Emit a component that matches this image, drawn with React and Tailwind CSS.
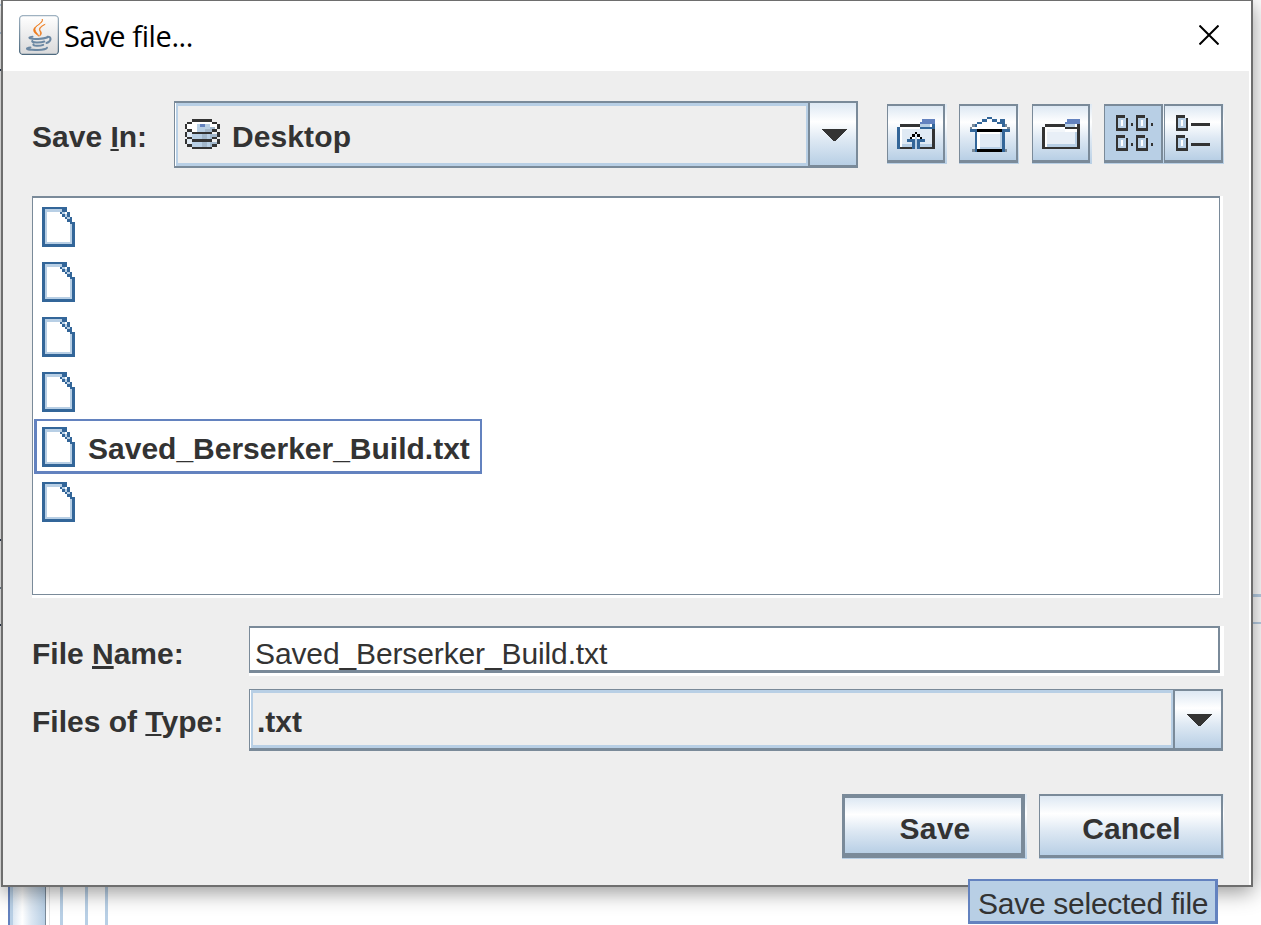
import React from 'react';

const GLOSS = 'bg-[linear-gradient(180deg,#dde8f3_0%,#ffffff_30%,#dde8f3_60%,#b8cfe5_100%)]';

/* Draws a pixel icon from [fill, x, y, width, height] tuples. */
function Pixels({ w, h, rects, className = '' }) {
  return (
    <svg width={w} height={h} viewBox={`0 0 ${w} ${h}`} shapeRendering="crispEdges" className={`block shrink-0 ${className}`}>
      {rects.map(([fill, x, y, rw, rh], i) => (
        <rect key={i} x={x} y={y} width={rw} height={rh} fill={fill} />
      ))}
    </svg>
  );
}

const K = '#333333', B = '#336699', L = '#b8cfe5', P = '#6382bf', W = '#ffffff', G = '#7a8a99', F = '#e0eaf4', N = '#000000', S = '#a3b8cc';

const FILE = [
  [W, 3, 2, 20, 36], [W, 20, 15, 10, 22],
  [B, 0, 0, 3, 40], [B, 0, 0, 25, 2], [B, 0, 37, 33, 3], [B, 30, 15, 3, 25],
  [L, 3, 2, 17, 3], [L, 3, 2, 2, 35], [L, 3, 35, 27, 2], [L, 28, 17, 2, 20],
  [B, 20, 0, 5, 5], [W, 20, 5, 5, 2], [L, 20, 5, 3, 2], [B, 18, 5, 2, 2], [B, 20, 7, 3, 3], [L, 23, 7, 2, 3],
  [B, 25, 5, 3, 5], [B, 23, 10, 2, 2], [L, 25, 10, 3, 3], [B, 28, 10, 2, 5], [B, 25, 12, 5, 3], [B, 28, 15, 5, 2],
];

const DISK = [
  [W, 7, 3, 20, 25], [W, 2, 5, 30, 5],
  [L, 12, 5, 13, 8], [P, 15, 5, 5, 3], [S, 20, 10, 7, 3], [S, 25, 8, 5, 2],
  [F, 2, 13, 8, 5], [L, 7, 15, 12, 5], [S, 17, 15, 15, 3], [S, 17, 18, 10, 2], [L, 22, 15, 3, 5],
  [F, 2, 20, 8, 5], [L, 7, 23, 12, 5], [S, 17, 23, 15, 2], [S, 17, 25, 10, 3], [L, 22, 23, 3, 5],
  [K, 7, 0, 20, 3], [K, 2, 3, 5, 2], [K, 27, 3, 5, 2], [K, 0, 5, 2, 5], [K, 32, 5, 3, 5],
  [K, 2, 10, 5, 3], [K, 27, 10, 5, 3], [K, 7, 13, 20, 2], [K, 0, 13, 2, 5], [K, 32, 13, 3, 5],
  [K, 2, 18, 5, 2], [K, 27, 18, 5, 2], [K, 7, 20, 20, 3], [K, 0, 20, 2, 5], [K, 32, 20, 3, 5],
  [K, 2, 25, 5, 3], [K, 27, 25, 5, 3], [K, 7, 28, 20, 2],
];

const UP = [
  [W, 3, 8, 32, 20], [F, 5, 10, 30, 18], [L, 5, 25, 10, 3], [L, 23, 25, 12, 3],
  [B, 0, 8, 3, 22], [K, 3, 5, 20, 3], [P, 25, 0, 13, 5], [P, 23, 3, 2, 2], [L, 23, 5, 12, 3], [W, 33, 5, 2, 3],
  [K, 35, 10, 3, 20], [B, 35, 5, 3, 5], [B, 23, 8, 15, 2], [K, 3, 28, 35, 2],
  [N, 18, 13, 2, 2], [N, 15, 15, 3, 3], [N, 20, 15, 3, 3], [N, 13, 18, 2, 2], [N, 23, 18, 2, 2],
  [W, 15, 18, 8, 2], [B, 10, 20, 8, 3], [B, 20, 20, 8, 3], [B, 15, 20, 3, 10], [B, 20, 20, 3, 10], [L, 18, 18, 2, 12],
];

const HOME = [
  [W, 17, 2, 5, 10], [W, 12, 5, 15, 7], [W, 7, 7, 25, 5], [W, 2, 10, 35, 2],
  [W, 7, 15, 25, 17], [F, 10, 17, 20, 13], [L, 30, 15, 2, 17], [L, 10, 30, 22, 2],
  [B, 17, 0, 5, 2], [B, 12, 2, 5, 3], [B, 22, 2, 5, 3], [B, 7, 5, 5, 2], [B, 27, 5, 5, 2], [B, 30, 2, 5, 5],
  [B, 5, 7, 2, 3], [G, 2, 7, 3, 3], [B, 32, 7, 3, 3], [G, 35, 7, 2, 3], [G, 0, 10, 2, 2], [G, 37, 10, 3, 2],
  [B, 0, 12, 40, 3], [N, 7, 12, 25, 3], [B, 5, 15, 2, 20], [B, 32, 15, 3, 20], [N, 7, 32, 25, 3],
  [G, 2, 32, 3, 3], [G, 35, 32, 2, 3],
];

const FOLDER = [
  [W, 3, 8, 32, 20], ['#e8eff7', 5, 13, 28, 12], ['#f2f6fa', 5, 10, 18, 3], [L, 5, 25, 28, 3], [L, 33, 13, 2, 15], [W, 33, 10, 2, 3],
  [K, 0, 8, 3, 22], [K, 3, 5, 20, 3], [P, 25, 0, 13, 5], [P, 23, 3, 2, 2], [L, 23, 5, 12, 3],
  [K, 35, 5, 3, 25], [K, 23, 8, 12, 2], [K, 0, 28, 38, 2], [W, 33, 5, 2, 3],
];

const cell = (x, y) => [
  [L, x + 2, y + 3, 8, 11], [W, x + 5, y + 5, 2, 6],
  [K, x, y, 9, 3], [K, x, y, 2, 16], [K, x + 10, y + 3, 2, 13], [K, x, y + 13, 12, 3],
];
const GRID = [0, 20].flatMap((y) => [0, 20].flatMap((x) => [...cell(x, y), [K, x + 15, y + 8, 2, 3]]));
const LIST = [0, 20].flatMap((y) => [...cell(0, y), [K, 15, y + 8, 19, 3]]);

function JavaLogo() {
  return (
    <svg width="40" height="40" viewBox="0 0 40 40" className="-mt-[2px] block shrink-0" fill="none">
      <defs>
        <linearGradient id="tile" x1="0" y1="0" x2="0" y2="1">
          <stop offset="0" stopColor="#ffffff" />
          <stop offset="1" stopColor="#d9d9da" />
        </linearGradient>
        <linearGradient id="edge" x1="0" y1="0" x2="0" y2="1">
          <stop offset="0" stopColor="#9fb2c1" />
          <stop offset="1" stopColor="#4d697e" />
        </linearGradient>
      </defs>
      <rect x="0.6" y="0.6" width="38.8" height="38.8" rx="3.5" fill="url(#tile)" stroke="url(#edge)" strokeWidth="1.3" />
      <g fill="#ee7b1c" stroke="#ee7b1c" strokeWidth="0.7">
        <path d="M23.300 4c2 4-7.600 6.400-7.300 10.400.2 2.700 2.900 4 3.900 6.800-3-2-5.900-4-5.100-7.100C15.900 10.400 23.800 8.900 23.300 4z" />
        <path d="M26.200 9.300c-3.700 1.500-6.400 3.400-5.700 6 .5 1.700 1.900 2.900.1 5.700 3.100-2.400 1.400-4.200.6-5.500-1.200-2 1.500-4.200 5-6.200z" />
      </g>
      <g stroke="#6c88a3" strokeWidth="2" strokeLinecap="round">
        <path d="M13.500 21.800c-3.300.4-3.800 1-2.300 1.600 3 1 13 .6 17-.9" />
        <path d="M28.500 21.800c4.200-.4 4.200 4.500-1 6.200" />
        <path d="M13.300 25.900c-1.200 2 8.500 2 12 .6" />
        <path d="M14.500 29.200c-1.300 2 6.500 2.100 9.700.6" />
        <path d="M11.500 32.500c-5.500.8-4.300 2 1.500 2.300 6.500.4 14.500-.2 15-2" />
      </g>
    </svg>
  );
}

function Arrow() {
  return (
    <svg width="25" height="12" viewBox="0 0 25 12" shapeRendering="crispEdges" className="block">
      <path d="M0 0H25L13.500 12H11.500Z" fill="#333333" />
    </svg>
  );
}

function Combo({ children, className, edge, arrowClass }) {
  return (
    <div className={`flex bg-[#7a8a99] ${className}`}>
      <div className="flex flex-1 bg-white pl-px">
        <div className={`flex flex-1 items-center border-[#b8cfe5] bg-[#eeeeee] ${edge}`}>{children}</div>
      </div>
      <div className={`ml-[2px] flex w-[46px] pl-[12px] ${GLOSS} ${arrowClass}`}>
        <Arrow />
      </div>
    </div>
  );
}

function ToolButton({ icon, w, h, pressed, className, pad }) {
  return (
    <div className={`h-[60px] shrink-0 pb-px ${GLOSS} ${className}`}>
      <div className={`h-[59px] border-t-2 border-r-2 border-b-[3px] border-l border-[#7a8a99] ${pressed ? 'bg-[#b8cfe5]' : GLOSS} ${pad}`}>
        <Pixels w={w} h={h} rects={icon} />
      </div>
    </div>
  );
}

const U = ({ children, thick }) => (
  <span className={`underline underline-offset-[2px] [text-decoration-skip-ink:none] ${thick ? 'decoration-[3px]' : 'decoration-[2px]'}`}>{children}</span>
);

const files = ['', '', '', '', 'Saved_Berserker_Build.txt', ''];

export default function App() {
  return (
    <div className="relative flex h-[925px] w-[1261px] flex-col justify-between overflow-hidden bg-white font-['Liberation_Sans',Arial,sans-serif] text-[30px] leading-[34px] text-[#333333]">
      <div className="flex h-[760px] justify-between">
        <div className="flex w-[4px] flex-col pt-[4px]">
          <div className="h-[2px] bg-[#b8cfe5]" />
          <div className="mt-[26px] h-[2px] bg-[#b8cfe5]" />
          <div className="mt-[35px] h-[2px] bg-[#333f55]" />
          <div className="mt-[468px] h-[2px] bg-[#333f55]" />
          <div className="mt-[46px] h-[2px] bg-[#7a8a99]" />
          <div className="mt-[35px] h-[2px] bg-[#333f55]" />
        </div>
        <div className="flex w-[12px] flex-col pt-[594px]">
          <div className="h-[3px] bg-[#b8cfe5]" />
          <div className="mt-[25px] h-[2px] bg-[#b8cfe5]" />
        </div>
      </div>
      <div className="flex h-[45px] pl-[8px]">
        <div className="w-[38px] border-r border-l-2 border-r-[#7a8a99] border-l-[#6382bf] bg-[linear-gradient(90deg,#b8cfe5_0%,#b8cfe5_8%,#dde8f3_9%,#ffffff_35%,#dde8f3_60%,#b8cfe5_100%)]" />
        <div className="ml-[3px] w-px bg-[#e5e5e5]" />
        <div className="ml-[10px] w-[3px] bg-[#b8cfe5]" />
        <div className="ml-[22px] w-[3px] bg-[#b8cfe5]" />
        <div className="ml-[17px] w-[3px] bg-[#b8cfe5]" />
      </div>

      <div className="absolute top-0 left-px flex h-[887px] w-[1252px] flex-col border-x-2 border-t border-b-2 border-[#6e6e6e] bg-[#eeeeee] shadow-[0_5px_20px_rgba(0,0,0,0.42)]">
        <div className="flex h-[70px] shrink-0 items-center justify-between bg-white pr-[32px] pl-[16px]">
          <div className="flex items-center">
            <JavaLogo />
            <span className="ml-[5px] font-['Open_Sans',sans-serif] text-[29px] tracking-[-0.4px] text-black">Save file...</span>
          </div>
          <svg width="20" height="20" viewBox="0 0 20 20" className="-mt-[2px] block">
            <path d="M0.500 0.500L19.500 19.500M19.500 0.500L0.500 19.500" stroke="#000" strokeWidth="2" />
          </svg>
        </div>
        <div className="flex flex-1 flex-col border-r-2 border-white pt-[30px] pl-[29px] font-bold">
          <div className="flex h-[67px]">
            <div className="w-[142px] self-center pt-[5px]">Save <U>I</U>n:</div>
            <Combo className="w-[684px] pt-[2px] pr-[2px] pb-[2px] pl-px" edge="border-x-2 border-y-[3px] pl-[7px]" arrowClass="-mb-px h-[62px] pt-[26px]">
              <Pixels w={35} h={30} rects={DISK} className="-mt-px" />
              <span className="ml-[12px] pt-[4px] tracking-[0.1px]">Desktop</span>
            </Combo>
            <div className="ml-[29px] flex pt-[3px]">
              <ToolButton icon={UP} w={38} h={30} className="w-[60px] pr-[2px]" pad="pt-[13px] pl-[9px]" />
              <ToolButton icon={HOME} w={40} h={35} className="ml-[12px] w-[60px] pr-px" pad="pt-[11px] pl-[10px]" />
              <ToolButton icon={FOLDER} w={38} h={30} className="ml-[13px] w-[60px] pr-[2px]" pad="pt-[13px] pl-[9px]" />
              <ToolButton icon={GRID} w={37} h={36} pressed className="ml-[12px] w-[60px] pr-px" pad="pt-[9px] pl-[11px]" />
              <ToolButton icon={LIST} w={34} h={36} className="w-[60px] pr-px" pad="pt-[9px] pl-[11px]" />
            </div>
          </div>

          <div className="mt-[28px] h-[402px] w-[1191px] shrink-0 bg-white">
            <div className="flex h-[399px] w-[1188px] flex-col border border-t-2 border-[#7a8a99] pt-px pl-px">
              {files.map((name, i) => (
                <div
                  key={i}
                  className={`flex h-[55px] items-center border-t-2 border-r-2 border-b-[3px] border-l-[3px] pl-[5px] ${name ? 'w-[448px] border-[#6382bf]' : 'w-full border-transparent'}`}
                >
                  <Pixels w={33} h={40} rects={FILE} className="mt-[2px]" />
                  {name && <span className="ml-[13px] pt-[5px]">{name}</span>}
                </div>
              ))}
            </div>
          </div>

          <div className="mt-[28px] flex h-[50px]">
            <div className="w-[217px] pt-[11px]">File <U thick>N</U>ame:</div>
            <div className="w-[975px] bg-white">
              <div className="h-[47px] w-[971px] border-t-2 border-r-2 border-b-[3px] border-l border-[#7a8a99] pt-[9px] pl-[5px] font-normal tracking-[-0.12px]">
                Saved_Berserker_Build.txt
              </div>
            </div>
          </div>

          <div className="mt-[13px] flex h-[62px]">
            <div className="w-[217px] pt-[16px]">Files of <U>T</U>ype:</div>
            <Combo className="w-[974px] pt-px pr-[2px] pb-[3px] pl-px" edge="border-t-[3px] border-x-2 border-b-[3px] pl-[4px]" arrowClass="mt-px pt-[23px]">
              <span className="pt-[6px]">.txt</span>
            </Combo>
          </div>

          <div className="mt-[43px] flex justify-end pr-[25px]">
            <div className={`h-[65px] w-[185px] pr-[2px] pb-px ${GLOSS}`}>
              <div className={`h-[64px] border-t-4 border-r-4 border-b-[5px] border-l-[3px] border-[#7a8a99] pt-[14px] pl-[4px] text-center tracking-[0.2px] ${GLOSS}`}>Save</div>
            </div>
            <div className={`ml-[12px] h-[65px] w-[185px] pr-px pb-px ${GLOSS}`}>
              <div className={`h-[64px] border-t-2 border-r-2 border-b-[3px] border-l border-[#7a8a99] pt-[16px] pl-[2px] text-center ${GLOSS}`}>Cancel</div>
            </div>
          </div>
        </div>
      </div>

      <div className="absolute top-[879px] left-[968px] h-[45px] w-[250px] border-t-2 border-r-[3px] border-b-[3px] border-l-2 border-[#6382bf] bg-[#b8cfe5] pt-[6px] pl-[8px] tracking-[-0.27px] whitespace-nowrap">
        Save selected file
      </div>
    </div>
  );
}
